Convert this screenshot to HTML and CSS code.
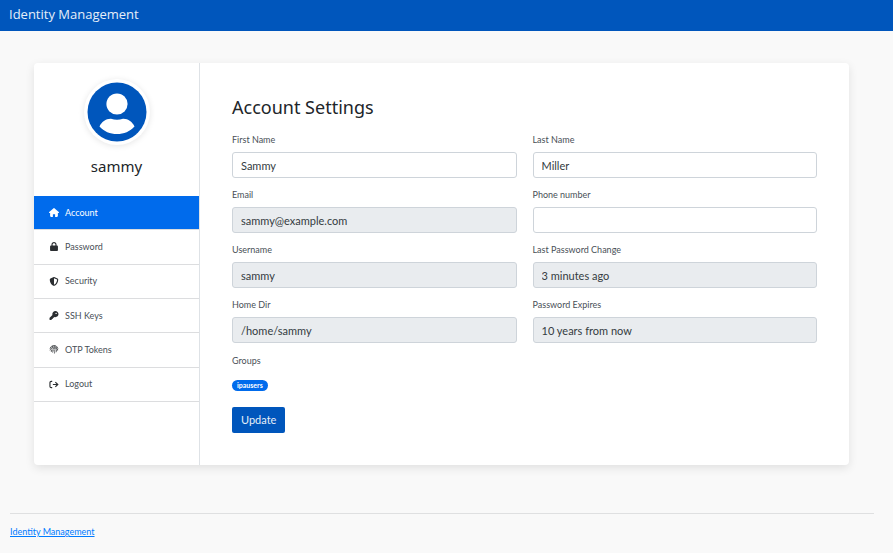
FILE: index.html
```html
<!DOCTYPE html>
<html lang="en">
<head>
<meta charset="utf-8">
<meta name="viewport" content="width=device-width, initial-scale=1">
<title>Identity Management</title>
<link rel="stylesheet" href="styles.css">
</head>
<body>
<header class="navbar"><a class="brand" href="#">Identity Management</a></header>
<main class="page">
  <div class="card">
    <aside class="sidebar">
      <div class="profile">
        <div class="avatar">
          <svg viewBox="0 0 60 60" aria-hidden="true"><circle cx="30" cy="30" r="29.5" fill="#0056bc"/><circle cx="30" cy="22" r="10.6" fill="#fff"/><path d="M12.5 44.500C14.500 40 19 36.600 24 36.800C28 38 32 38 36 36.800C41 36.600 45.500 40 47.500 44.500C43 49.500 37 52 30 52S17 49.500 12.500 44.500Z" fill="#fff"/></svg>
        </div>
        <h2 class="username">sammy</h2>
      </div>
      <nav class="menu">
        <a class="item active" href="#"><svg class="icon" viewBox="0 0 576 512" aria-hidden="true"><path d="M575.800 255.500c0 18-15 32.100-32 32.100h-32l.7 160.200c0 36-20 64.200-56 64.200H352V352H224v160H120c-32 0-56-28-56-64V287.600H32c-18 0-32-14-32-32.100 0-9 3-17 10-24L266.400 8c7-7 15-8 22-8s15 2 21 7l255.400 224.500c8 7 12 15 11 24z"/></svg>Account</a>
        <a class="item" href="#"><svg class="icon" viewBox="0 0 448 512" aria-hidden="true"><path d="M144 144v48h160v-48c0-44-36-80-80-80s-80 36-80 80zm-64 48v-48C80 64 144 0 224 0s144 64 144 144v48h16c35 0 64 29 64 64v192c0 35-29 64-64 64H64c-35 0-64-29-64-64V256c0-35 29-64 64-64h16z"/></svg>Password</a>
        <a class="item" href="#"><svg class="icon" viewBox="0 0 512 512" aria-hidden="true"><path d="M256 0c5 0 9 1 13 3l189 80c22 9 38 31 38 57-1 99-41 281-214 363-16 8-36 8-52 0C57 421 17 239 16 140c0-26 16-48 38-57L243 3c4-2 8-3 13-3zm0 67v378c138-67 175-215 176-304L256 67z"/></svg>Security</a>
        <a class="item" href="#"><svg class="icon" viewBox="0 0 512 512" aria-hidden="true"><path d="M336 352c97 0 176-79 176-176S433 0 336 0 160 79 160 176c0 19 3 37 8 54L7 391c-4 4-7 10-7 17v80c0 13 11 24 24 24h80c13 0 24-11 24-24v-40h40c13 0 24-11 24-24v-40h40c6 0 12-3 17-7l33-33c17 5 35 8 54 8zm40-256a40 40 0 1 1 0 80 40 40 0 1 1 0-80z"/></svg>SSH Keys</a>
        <a class="item" href="#"><svg class="icon otp" viewBox="0 0 20 20" aria-hidden="true"><path d="M1 8C3 3 7 1 10 1s7 2 9 7M1 12c2-5 5-8 9-8s8 4 8 8M4 15c1-4 2-8 6-8s6 4 5 9M7 17c1-3 1-7 3-7s2 4 1 9M2 5l3 3M6 2l2 5M12 1v6M17 4l-3 5M19 10l-4 2M3 13l4 0"/></svg>OTP Tokens</a>
        <a class="item" href="#"><svg class="icon line" viewBox="0 0 20 20" aria-hidden="true"><path d="M6 3H4Q1 3 1 5.500v9Q1 17 4 17H6M7.500 10H18M13 4.500L18.500 10 13 15.500"/></svg>Logout</a>
      </nav>
    </aside>
    <section class="content">
      <h1 class="title">Account Settings</h1>
      <form>
        <div class="fields">
          <div class="field"><label for="first">First Name</label><input id="first" type="text" value="Sammy"></div>
          <div class="field"><label for="last">Last Name</label><input id="last" type="text" value="Miller"></div>
          <div class="field"><label for="email">Email</label><input id="email" type="text" value="sammy@example.com" readonly></div>
          <div class="field"><label for="phone">Phone number</label><input id="phone" type="text"></div>
          <div class="field"><label for="user">Username</label><input id="user" type="text" value="sammy" readonly></div>
          <div class="field"><label for="changed">Last Password Change</label><input id="changed" type="text" value="3 minutes ago" readonly></div>
          <div class="field"><label for="home">Home Dir</label><input id="home" type="text" value="/home/sammy" readonly></div>
          <div class="field"><label for="expires">Password Expires</label><input id="expires" type="text" value="10 years from now" readonly></div>
        </div>
        <div class="groups"><span class="caption">Groups</span><span class="badge">ipausers</span></div>
        <button class="update" type="submit">Update</button>
      </form>
    </section>
  </div>
</main>
<footer class="footer"><a href="#">Identity Management</a></footer>
</body>
</html>
```
FILE: styles.css
```css
* { box-sizing: border-box; }
body {
  margin: 0;
  background: #f9f9f9;
  color: #212529;
  font: 9px/14px Lato, "Noto Sans", sans-serif;
}
a { color: inherit; text-decoration: none; }
.navbar {
  padding: 4px 9px 7px;
  background: #0056bc;
  color: #e6eef8;
}
.brand {
  display: block;
  font-family: "Open Sans", sans-serif;
  font-size: 13px;
  line-height: 20px;
}
.page { padding: 32px 44px 48px 34px; }
.card {
  display: flex;
  background: #fff;
  border-radius: 4px;
  box-shadow: 0 3px 10px rgba(0, 0, 0, 0.1);
}
.sidebar {
  flex: 0 0 166px;
  border-right: 1px solid #dee2e6;
}
.profile { padding: 16px 0 20px; text-align: center; }
.avatar {
  width: 66px;
  height: 66px;
  margin: 0 auto;
  padding: 3px;
  border-radius: 50%;
  background: #fff;
  box-shadow: 0 1px 6px rgba(0, 0, 0, 0.1);
}
.avatar svg { display: block; width: 60px; height: 60px; }
.username {
  margin: 11px 0 0;
  font-family: "Noto Sans", sans-serif;
  font-size: 15px;
  font-weight: 400;
  line-height: 20px;
}
.menu {
  display: grid;
  grid-auto-rows: 1fr;
  min-height: 206px;
}
.item {
  display: flex;
  align-items: center;
  gap: 6px;
  padding: 0 15px;
  border-bottom: 1px solid #dcdddf;
  color: #495057;
}
.item.active { background: #006bec; color: #fff; }
.icon { width: 10px; height: 9px; fill: #2b2e31; }
.active .icon { fill: #fff; }
.icon.line, .icon.otp { fill: none; stroke: #2b2e31; }
.icon.line { stroke-width: 2.5; }
.icon.otp { stroke-width: 1.5; }
.content { flex: 1; min-width: 0; padding: 32px; }
.title {
  margin: 0;
  font-family: "Noto Sans", sans-serif;
  font-size: 18px;
  font-weight: 400;
  line-height: 24px;
}
form { margin-top: 14px; }
.fields {
  display: grid;
  grid-template-columns: 1fr 1fr;
  gap: 10px 16px;
}
label, .caption {
  display: block;
  margin-bottom: 5px;
  color: #495057;
}
input {
  display: block;
  width: 100%;
  height: 26px;
  padding: 0 8px;
  border: 1px solid #ced4da;
  border-radius: 3px;
  background: #fff;
  color: #343b41;
  font: 11px/16px Lato, "Noto Sans", sans-serif;
}
input:read-only { background: #e9ecef; }
.groups { margin-top: 11px; }
.badge {
  display: table;
  margin-top: 12px;
  padding: 0 5px;
  border-radius: 6px;
  background: #006bec;
  color: #fff;
  font-size: 7px;
  font-weight: 700;
  line-height: 11px;
}
.update {
  display: block;
  height: 26px;
  margin-top: 16px;
  padding: 0 9px;
  border: 0;
  border-radius: 2px;
  background: #0056bc;
  color: #e6eef8;
  font: 11px/16px Lato, "Noto Sans", sans-serif;
}
.footer {
  margin: 0 19px 0 10px;
  padding-top: 11px;
  border-top: 1px solid #dfe0e1;
}
.footer a { color: #007bff; text-decoration: underline; }
```
